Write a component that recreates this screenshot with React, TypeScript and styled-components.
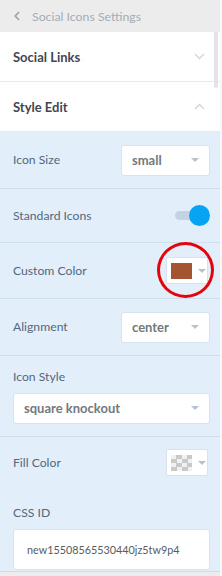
import React from "react";
import styled, { createGlobalStyle } from "styled-components";

const GlobalStyle = createGlobalStyle`
  html, body {
    margin: 0;
    padding: 0;
    background: #f6f7f8;
    font-family: Lato, "Open Sans", sans-serif;
  }
`;

const Page = styled.div`
  position: relative;
  width: 222px;
  height: 576px;
  overflow: hidden;
  background: #f6f7f8;
`;

const Panel = styled.div`
  width: 220px;
  display: flex;
  flex-direction: column;
`;

const TopBar = styled.div`
  height: 32px;
  background: #ececec;
  display: flex;
  align-items: center;
  gap: 12px;
  padding-left: 14px;
  color: #a5adb5;
  font-size: 12.3px;
`;

const SectionHead = styled.div`
  height: 50px;
  background: #fff;
  border-bottom: 1px solid #e7e9eb;
  box-sizing: border-box;
  display: flex;
  align-items: center;
  justify-content: space-between;
  padding: 0 15px 0 13px;
  color: #3f4750;
  font-size: 13px;
  font-weight: 700;
`;

const Body = styled.div`
  background: #e2effb;
  display: flex;
  flex-direction: column;
`;

const Row = styled.div<{ $h: number; $stack?: boolean; $last?: boolean }>`
  height: ${(p) => p.$h}px;
  box-sizing: border-box;
  border-bottom: ${(p) => (p.$last ? "none" : "1px solid #cfdfee")};
  padding: 0 10px ${(p) => (p.$last ? "1px" : "0")} 13px;
  display: flex;
  flex-direction: ${(p) => (p.$stack ? "column" : "row")};
  align-items: ${(p) => (p.$stack ? "stretch" : "center")};
  justify-content: ${(p) =>
    p.$stack ? (p.$last ? "flex-end" : "center") : "space-between"};
  gap: 8px;
`;

const Label = styled.span`
  color: #54677b;
  font-size: 12.2px;
  line-height: 16px;
`;

const Select = styled.div<{ $w?: number }>`
  width: ${(p) => (p.$w ? `${p.$w}px` : "auto")};
  height: 31px;
  box-sizing: border-box;
  background: #fff;
  border: 1px solid #d6e2ee;
  border-radius: 3px;
  display: flex;
  align-items: center;
  justify-content: space-between;
  padding: 0 10px;
  color: #74787d;
  font-size: 13px;
  font-weight: 700;
`;

const Caret = styled.span`
  width: 0;
  height: 0;
  border-left: 4px solid transparent;
  border-right: 4px solid transparent;
  border-top: 4px solid #b5c3d1;
`;

const SwatchBox = styled.div`
  position: relative;
  width: 42px;
  height: 27px;
  margin-right: 2px;
  box-sizing: border-box;
  background: #fff;
  border: 1px solid #d6e2ee;
  border-radius: 2px;
  display: flex;
  align-items: center;
  gap: 6px;
  padding-left: 4px;
`;

const Swatch = styled.span<{ $checker?: boolean }>`
  width: 21px;
  height: 16px;
  background: ${(p) =>
    p.$checker
      ? "repeating-conic-gradient(#c9c9c9 0% 25%, #f1f1f1 0% 50%) 0 0 / 11px 8px"
      : "#a2552f"};
`;

const Ring = styled.span`
  position: absolute;
  left: -10px;
  top: -16px;
  width: 57px;
  height: 56px;
  box-sizing: border-box;
  border: 3px solid #e4050c;
  border-radius: 50%;
`;

const Toggle = styled.div`
  position: relative;
  width: 35px;
  height: 21px;
  display: flex;
  align-items: center;
`;

const Track = styled.span`
  width: 30px;
  height: 9px;
  border-radius: 5px;
  background: #c3d3e2;
`;

const Knob = styled.span`
  position: absolute;
  right: 0;
  top: 0;
  width: 21px;
  height: 21px;
  border-radius: 50%;
  background: #07a4f6;
`;

const Input = styled.div`
  height: 41px;
  box-sizing: border-box;
  background: #fff;
  border: 1px solid #d6e2ee;
  border-radius: 3px;
  display: flex;
  align-items: center;
  padding-left: 13px;
  color: #575c61;
  font-size: 10.8px;
`;

const Footer = styled.div`
  height: 6px;
  background: #ececec;
  border-top: 1px solid #d9d9d9;
`;

const Thumb = styled.span`
  position: absolute;
  left: 214px;
  top: 32px;
  width: 4px;
  height: 56px;
  border-radius: 0 0 2px 2px;
  background: #e4e4e4;
`;

const Chevron = ({ up, color }: { up?: boolean; color: string }) => (
  <svg width="11" height="7" viewBox="0 0 11 7" fill="none">
    <path
      d={up ? "M1 6 L5.5 1.5 L10 6" : "M1 1 L5.5 5.5 L10 1"}
      stroke={color}
      strokeWidth="1.3"
    />
  </svg>
);

export default function App() {
  return (
    <Page>
      <GlobalStyle />
      <Panel>
        <TopBar>
          <svg width="6" height="10" viewBox="0 0 6 10" fill="none">
            <path d="M5 1 L1.2 5 L5 9" stroke="#9aa2aa" strokeWidth="1.6" />
          </svg>
          Social Icons Settings
        </TopBar>
        <SectionHead>
          Social Links
          <Chevron color="#cfd3d7" />
        </SectionHead>
        <SectionHead>
          Style Edit
          <Chevron up color="#cfd3d7" />
        </SectionHead>
        <Body>
          <Row $h={57}>
            <Label>Icon Size</Label>
            <Select $w={89}>
              small
              <Caret />
            </Select>
          </Row>
          <Row $h={54}>
            <Label>Standard Icons</Label>
            <Toggle>
              <Track />
              <Knob />
            </Toggle>
          </Row>
          <Row $h={56}>
            <Label>Custom Color</Label>
            <SwatchBox>
              <Swatch />
              <Caret />
              <Ring />
            </SwatchBox>
          </Row>
          <Row $h={57}>
            <Label>Alignment</Label>
            <Select $w={89}>
              center
              <Caret />
            </Select>
          </Row>
          <Row $h={81} $stack>
            <Label>Icon Style</Label>
            <Select>
              square knockout
              <Caret />
            </Select>
          </Row>
          <Row $h={52} $last>
            <Label>Fill Color</Label>
            <SwatchBox>
              <Swatch $checker />
              <Caret />
            </SwatchBox>
          </Row>
          <Row $h={82} $stack $last>
            <Label>CSS ID</Label>
            <Input>new15508565530440jz5tw9p4</Input>
          </Row>
        </Body>
        <Footer />
      </Panel>
      <Thumb />
    </Page>
  );
}
